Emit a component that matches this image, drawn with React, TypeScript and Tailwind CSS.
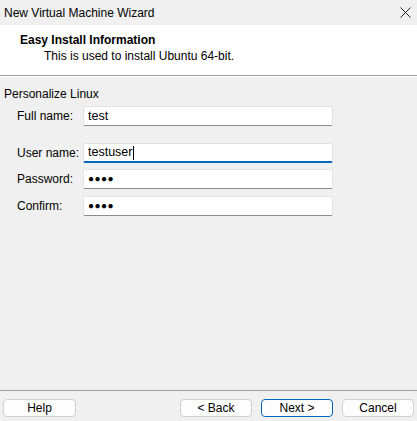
const font = { fontFamily: '"Segoe UI", "Liberation Sans", Arial, sans-serif' };

interface FieldProps {
  label: string;
  value: string;
  focused?: boolean;
  secret?: boolean;
  className?: string;
}

function Field({ label, value, focused, secret, className }: FieldProps) {
  return (
    <div className={`flex items-center ${className ?? ""}`}>
      <span className="w-[66px] pl-[17px] box-content text-[12px] text-[#000]">{label}</span>
      <div
        className={`flex items-center h-[20px] w-[250px] bg-white border border-[#e3e3e3] rounded-[2px] pl-[4px] ${
          focused ? "border-b-2 border-b-[#0067c0]" : "border-b-[#8a8a8a]"
        }`}
      >
        {secret ? (
          <span className="text-[10px] tracking-[0.5px] text-black leading-none">●●●●</span>
        ) : (
          <span className="text-[12.5px] text-black leading-none">{value}</span>
        )}
        {focused && <span className="ml-[1px] w-px h-[14px] bg-black" />}
      </div>
    </div>
  );
}

function Btn({ label, primary, className }: { label: string; primary?: boolean; className?: string }) {
  return (
    <div
      className={`flex items-center justify-center h-[18px] w-[72px] rounded-[4px] bg-[#fdfdfd] text-[12px] text-black ${
        primary ? "border border-[#0067c0]" : "border border-[#d0d0d0]"
      } ${className ?? ""}`}
    >
      {label}
    </div>
  );
}

export default function App() {
  return (
    <div style={font} className="w-[417px] h-[421px] bg-[#f0f0f0] flex flex-col overflow-hidden">
      <div className="h-[25px] flex items-center justify-between pl-[4px] pr-[4px]">
        <span className="text-[12px] text-black">New Virtual Machine Wizard</span>
        <svg width="11" height="11" viewBox="0 0 11 11" className="mr-[2px]">
          <path d="M0.5 0.5 L10.5 10.5 M10.5 0.5 L0.5 10.5" stroke="#222" strokeWidth="1" />
        </svg>
      </div>

      <div className="h-[50px] bg-white pt-[8px]">
        <p className="pl-[20px] text-[12px] font-bold text-black leading-[15px]">Easy Install Information</p>
        <p className="pl-[44px] text-[12px] text-black leading-[15px] mt-[1px]">
          This is used to install Ubuntu 64-bit.
        </p>
      </div>
      <div className="h-px bg-[#a0a0a0]" />
      <div className="h-px bg-white" />

      <div className="flex-1 flex flex-col">
        <p className="pl-[4px] mt-[10px] text-[12px] text-black leading-[15px]">Personalize Linux</p>
        <Field label="Full name:" value="test" className="mt-[4px]" />
        <Field label="User name:" value="testuser" focused className="mt-[17px]" />
        <Field label="Password:" value="" secret className="mt-[6px]" />
        <Field label="Confirm:" value="" secret className="mt-[7px]" />
      </div>

      <div className="h-px bg-[#a0a0a0]" />
      <div className="h-[30px] flex items-start pt-[8px] pl-[3px] pr-[3px]">
        <Btn label="Help" className="w-[73px]" />
        <div className="flex-1" />
        <Btn label="< Back" />
        <Btn label="Next >" primary className="ml-[9px]" />
        <Btn label="Cancel" className="ml-[9px]" />
      </div>
    </div>
  );
}
